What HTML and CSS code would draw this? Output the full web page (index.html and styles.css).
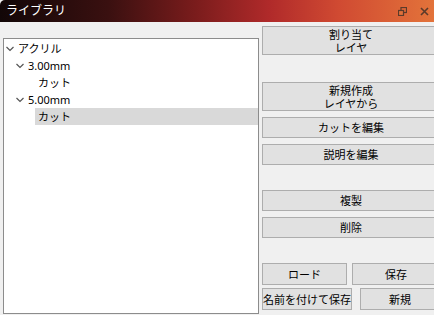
FILE: index.html
```html
<!DOCTYPE html>
<html lang="ja">
<head>
    <meta charset="UTF-8">
    <title>ライブラリ</title>
    <link rel="stylesheet" href="styles.css">
</head>
<body>
    <div class="window">
        <header class="titlebar">
            <span class="title">ライブラリ</span>
            <div class="title-icons">
                <svg class="icon-restore" width="9" height="9" viewBox="0 0 9 9">
                    <rect x="3" y="0.5" width="5.5" height="5" fill="none" stroke="#5b3a2a" stroke-width="1.2"/>
                    <rect x="0.5" y="3.5" width="5" height="5" fill="#e0713a" stroke="#5b3a2a" stroke-width="1.2"/>
                </svg>
                <svg class="icon-close" width="9" height="9" viewBox="0 0 9 9">
                    <path d="M1 1 L8 8 M8 1 L1 8" stroke="#5b3a2a" stroke-width="1.6"/>
                </svg>
            </div>
        </header>

        <div class="content">
            <div class="tree">
                <div class="node level-0">
                    <svg class="chevron" width="10" height="6" viewBox="0 0 10 6"><path d="M1.5 1 L5 4.5 L8.5 1" fill="none" stroke="#555" stroke-width="1.2"/></svg>
                    <span class="label">アクリル</span>
                </div>
                <div class="node level-1">
                    <svg class="chevron" width="10" height="6" viewBox="0 0 10 6"><path d="M1.5 1 L5 4.5 L8.5 1" fill="none" stroke="#555" stroke-width="1.2"/></svg>
                    <span class="label">3.00mm</span>
                </div>
                <div class="node level-2">
                    <span class="spacer"></span>
                    <span class="label">カット</span>
                </div>
                <div class="node level-1">
                    <svg class="chevron" width="10" height="6" viewBox="0 0 10 6"><path d="M1.5 1 L5 4.5 L8.5 1" fill="none" stroke="#555" stroke-width="1.2"/></svg>
                    <span class="label">5.00mm</span>
                </div>
                <div class="node level-2">
                    <span class="spacer"></span>
                    <span class="label selected">カット</span>
                </div>
            </div>

            <div class="actions">
                <button class="btn tall first">割り当て<br>レイヤ</button>
                <button class="btn tall gap-big">新規作成<br>レイヤから</button>
                <button class="btn gap-small">カットを編集</button>
                <button class="btn gap-small">説明を編集</button>
                <button class="btn gap-mid">複製</button>
                <button class="btn gap-small">削除</button>
                <div class="btn-row gap-mid">
                    <button class="btn load">ロード</button>
                    <button class="btn">保存</button>
                </div>
                <div class="btn-row row-last">
                    <button class="btn save-as">名前を付けて保存</button>
                    <button class="btn">新規</button>
                </div>
            </div>
        </div>
    </div>
</body>
</html>
```

FILE: styles.css
```css
body {
    margin: 0;
    padding: 0;
    background-color: #f0f0f0;
    font-family: "Noto Sans", "Noto Sans CJK JP", sans-serif;
    font-size: 12px;
    color: #000;
    overflow: hidden;
}

.window {
    width: 434px;
    height: 315px;
    overflow: hidden;
}

.titlebar {
    height: 22px;
    display: flex;
    align-items: center;
    justify-content: space-between;
    padding: 0 5px 0 6px;
    border-top-left-radius: 5px;
    background: linear-gradient(to right, #120707 0%, #3a1010 25%, #7a1c1c 45%, #b02a2a 62%, #d04a32 78%, #e3733a 100%);
    color: #fff;
}

.title {
    font-size: 12px;
    line-height: 22px;
}

.title-icons {
    display: flex;
    align-items: center;
    gap: 13px;
}

.content {
    display: flex;
    align-items: flex-start;
}

.tree {
    flex-shrink: 0;
    width: 254px;
    height: 273px;
    margin: 16px 0 0 3px;
    padding-top: 1px;
    font-size: 11px;
    background-color: #fff;
    border: 1px solid #8c8c8c;
}

.node {
    display: flex;
    align-items: center;
    height: 17px;
    line-height: 17px;
}

.level-0 { padding-left: 1px; }
.level-1 { padding-left: 11px; }
.level-2 { padding-left: 21px; }

.chevron {
    width: 10px;
    margin-right: 3px;
}

.spacer {
    width: 10px;
}

.level-2 .label {
    padding-left: 3px;
}

.label.selected {
    flex: 1;
    background-color: #d9d9d9;
}

.actions {
    display: flex;
    flex-direction: column;
    width: 178px;
    margin-left: 3px;
    flex-shrink: 0;
}

.btn {
    height: 21px;
    padding: 0;
    font-family: inherit;
    font-size: 11px;
    line-height: 13px;
    white-space: nowrap;
    color: #000;
    background-color: #e1e1e1;
    border: 1px solid #adadad;
    border-radius: 0;
}

.btn.tall {
    height: 29px;
    line-height: 13px;
}

.first { margin-top: 4px; }
.gap-big { margin-top: 27px; }
.gap-small { margin-top: 6px; }
.gap-mid { margin-top: 25px; }

.btn-row {
    display: flex;
    gap: 5px;
}

.btn-row .btn {
    flex: 1;
    height: 22px;
}

.btn-row .load {
    flex: 0 0 85px;
}

.row-last {
    margin-top: 3px;
    gap: 8px;
}

.btn-row .save-as {
    flex: 0 0 90px;
}
```
